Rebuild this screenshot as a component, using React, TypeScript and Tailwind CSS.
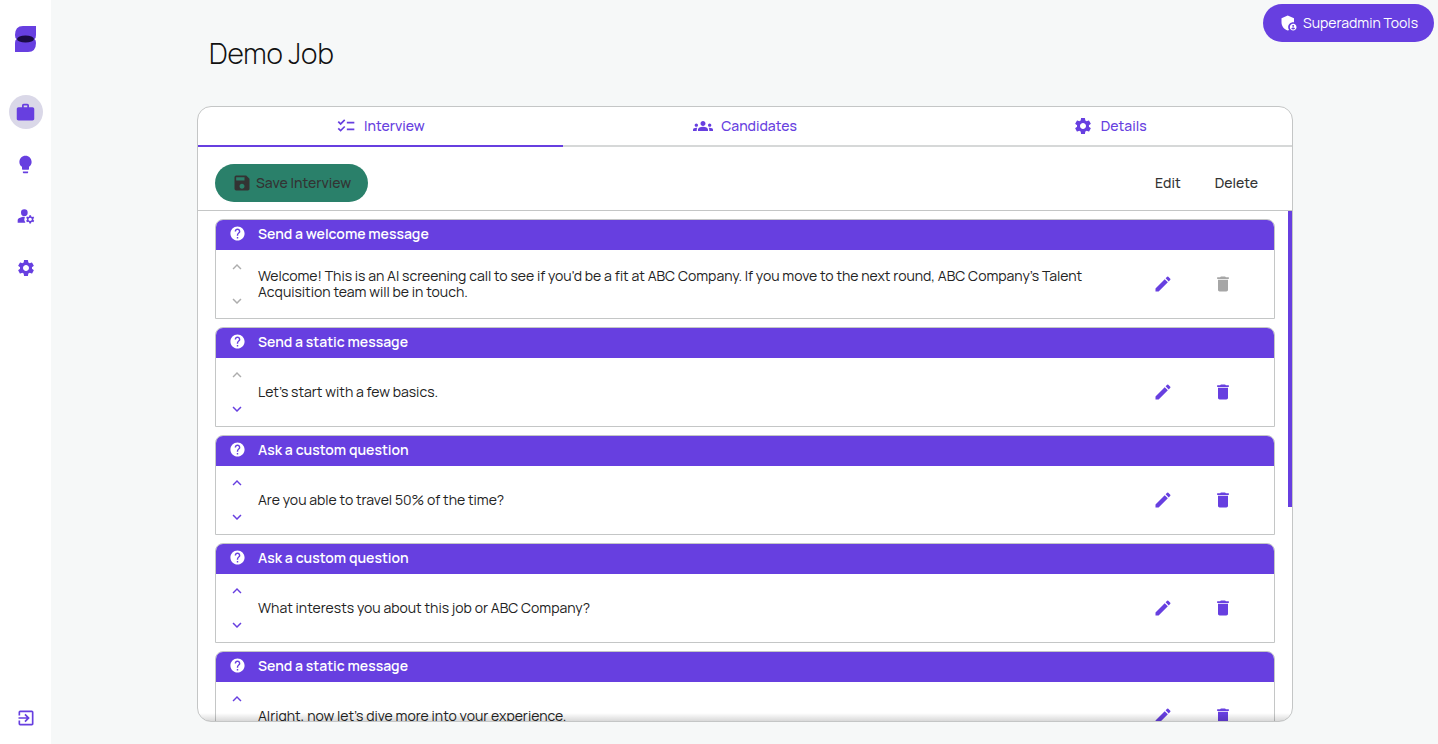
import type { ReactNode } from 'react'
import {
    MdAdminPanelSettings,
    MdChecklist,
    MdDelete,
    MdEdit,
    MdExitToApp,
    MdGroups,
    MdHelp,
    MdKeyboardArrowDown,
    MdKeyboardArrowUp,
    MdLightbulb,
    MdManageAccounts,
    MdSave,
    MdSettings,
    MdWork,
} from 'react-icons/md'

type Step = {
    title: string
    text: string
    canMoveUp: boolean
    canMoveDown: boolean
    canDelete: boolean
}

const steps: Step[] = [
    {
        title: 'Send a welcome message',
        text: "Welcome! This is an AI screening call to see if you'd be a fit at ABC Company. If you move to the next round, ABC Company's Talent Acquisition team will be in touch.",
        canMoveUp: false,
        canMoveDown: false,
        canDelete: false,
    },
    {
        title: 'Send a static message',
        text: "Let's start with a few basics.",
        canMoveUp: false,
        canMoveDown: true,
        canDelete: true,
    },
    {
        title: 'Ask a custom question',
        text: 'Are you able to travel 50% of the time?',
        canMoveUp: true,
        canMoveDown: true,
        canDelete: true,
    },
    {
        title: 'Ask a custom question',
        text: 'What interests you about this job or ABC Company?',
        canMoveUp: true,
        canMoveDown: true,
        canDelete: true,
    },
    {
        title: 'Send a static message',
        text: "Alright, now let's dive more into your experience.",
        canMoveUp: true,
        canMoveDown: true,
        canDelete: true,
    },
]

function Logo() {
    return (
        <svg width="21" height="26" viewBox="0 0 21 26" role="img" aria-label="Home">
            <path d="M8 0H21V9Q21 12 19.500 13Q21 14 21 17Q21 26 13 26H0V17Q0 14 1.500 13Q0 12 0 9Q0 0 8 0Z" fill="#673fe0" />
            <ellipse cx="10.500" cy="13" rx="8.500" ry="3.600" fill="#1b0b45" />
        </svg>
    )
}

function NavLink({ label, active, children }: { label: string; active?: boolean; children: ReactNode }) {
    return (
        <a
            href="#"
            aria-label={label}
            className={`flex size-[34px] items-center justify-center rounded-full ${active ? 'bg-[#dad8e8]' : ''}`}
        >
            {children}
        </a>
    )
}

function Sidebar() {
    return (
        <nav className="flex w-[51px] shrink-0 flex-col items-center bg-white pt-[26px] pb-[9px] text-[#673fe0]">
            <a href="#" className="block">
                <Logo />
            </a>
            <div className="mt-[43px] flex flex-col gap-[18px]">
                <NavLink label="Jobs" active>
                    <MdWork size={21} />
                </NavLink>
                <NavLink label="Ideas">
                    <MdLightbulb size={21} />
                </NavLink>
                <NavLink label="Accounts">
                    <MdManageAccounts size={20} />
                </NavLink>
                <NavLink label="Settings">
                    <MdSettings size={20} />
                </NavLink>
            </div>
            <div className="mt-auto">
                <NavLink label="Log out">
                    <MdExitToApp size={20} />
                </NavLink>
            </div>
        </nav>
    )
}

function Tab({ label, active, children }: { label: string; active?: boolean; children: ReactNode }) {
    return (
        <button
            role="tab"
            aria-selected={!!active}
            className={`flex h-10 flex-1 items-center justify-center gap-2 border-b-2 text-sm font-medium text-[#673fe0] ${
                active ? 'border-[#673fe0]' : 'border-[#d6d8d8]'
            }`}
        >
            {children}
            {label}
        </button>
    )
}

function StepCard({ step }: { step: Step }) {
    return (
        <li className="rounded-t-lg border border-[#c4c6c6]">
            <div className="flex h-[30px] items-center gap-3 rounded-t-[7px] bg-[#673fe0] pb-[3px] pl-[13px] text-sm font-semibold text-white">
                <MdHelp size={17} />
                {step.title}
            </div>
            <div className="flex h-[68px] items-center">
                <div className="flex w-[42px] shrink-0 flex-col items-center gap-4">
                    <button
                        aria-label="Move up"
                        disabled={!step.canMoveUp}
                        className="text-[#673fe0] disabled:text-[#adadad]"
                    >
                        <MdKeyboardArrowUp size={18} />
                    </button>
                    <button
                        aria-label="Move down"
                        disabled={!step.canMoveDown}
                        className="text-[#673fe0] disabled:text-[#adadad]"
                    >
                        <MdKeyboardArrowDown size={18} />
                    </button>
                </div>
                <p className="flex-1 pr-14 text-sm leading-4 text-[#222]">{step.text}</p>
                <div className="flex gap-10 pr-[41px]">
                    <button aria-label="Edit step" className="text-[#673fe0]">
                        <MdEdit size={20} />
                    </button>
                    <button
                        aria-label="Delete step"
                        disabled={!step.canDelete}
                        className="text-[#673fe0] disabled:text-[#a6a6a6]"
                    >
                        <MdDelete size={20} />
                    </button>
                </div>
            </div>
        </li>
    )
}

export default function App() {
    return (
        <div className="flex h-screen bg-[#f6f8f8] font-['Manrope','Inter',sans-serif]">
            <Sidebar />
            <main className="relative flex min-w-0 flex-1 flex-col pt-[35px] pr-[145px] pb-[22px] pl-[146px]">
                <button className="absolute top-1 right-1 flex h-[38px] items-center gap-1 rounded-full bg-[#673fe0] px-4 text-sm text-white">
                    <MdAdminPanelSettings size={20} />
                    Superadmin Tools
                </button>
                <h1 className="pl-3 text-[28px] leading-9 font-light text-[#111]">Demo Job</h1>

                <section className="mt-[35px] flex min-h-0 flex-1 flex-col overflow-hidden rounded-[14px] border border-[#c4c6c6] bg-white">
                    <div role="tablist" className="flex shrink-0">
                        <Tab label="Interview" active>
                            <MdChecklist size={20} />
                        </Tab>
                        <Tab label="Candidates">
                            <MdGroups size={20} />
                        </Tab>
                        <Tab label="Details">
                            <MdSettings size={20} />
                        </Tab>
                    </div>

                    <div className="flex h-16 shrink-0 items-center border-b border-[#c4c6c6] pt-2 pr-[34px] pl-[17px] text-sm font-medium text-[#333]">
                        <button className="flex h-[38px] items-center gap-1 rounded-full bg-[#2a806a] px-[17px]">
                            <MdSave size={20} />
                            Save Interview
                        </button>
                        <button className="ml-auto">Edit</button>
                        <button className="ml-[34px]">Delete</button>
                    </div>

                    <div className="relative min-h-0 flex-1">
                        <ul className="flex h-full flex-col gap-2 overflow-y-auto px-[17px] pt-2 [scrollbar-width:none]">
                            {steps.map((step, i) => (
                                <StepCard key={i} step={step} />
                            ))}
                        </ul>
                        <div className="absolute top-0 right-0 h-[58%] w-1 bg-[#673fe0]" />
                        <div className="pointer-events-none absolute inset-x-0 bottom-0 h-2 bg-linear-to-t from-black/15 to-transparent" />
                    </div>
                </section>
            </main>
        </div>
    )
}
